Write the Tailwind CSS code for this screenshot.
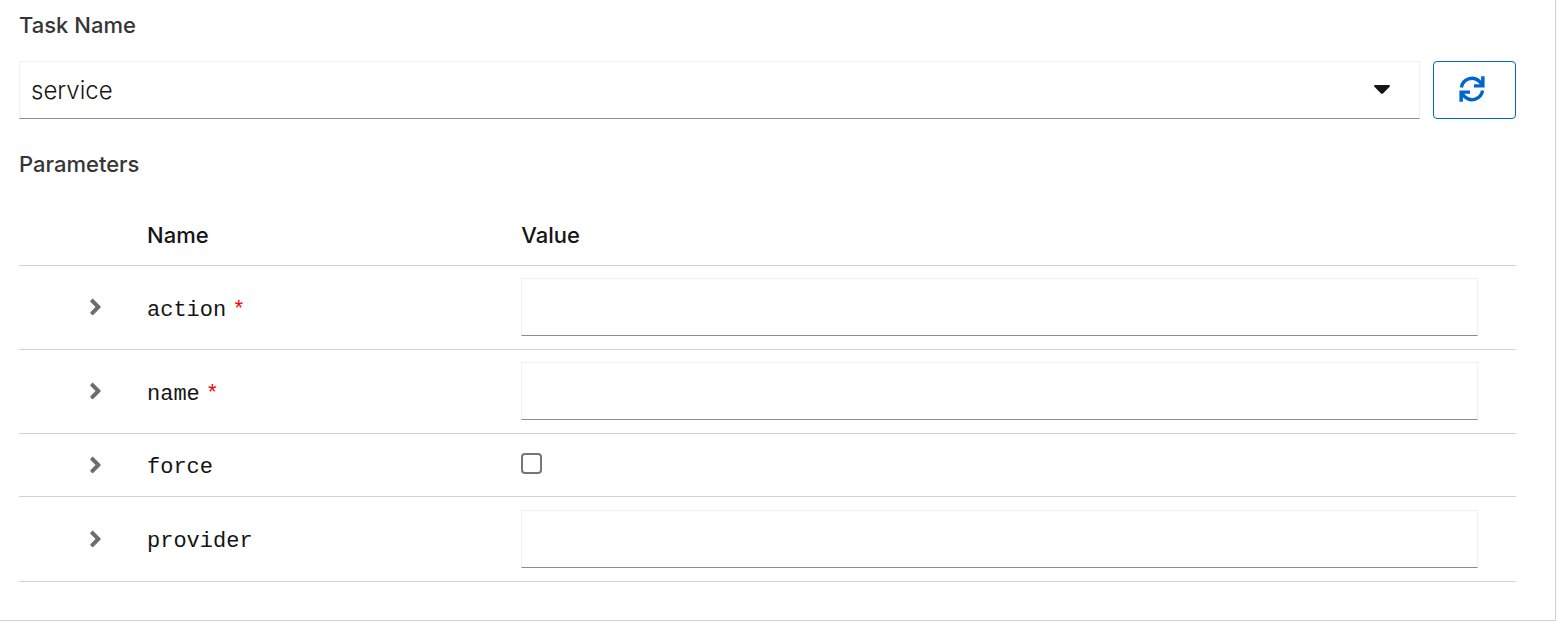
<!DOCTYPE html>
<html lang="en">

<head>
  <meta charset="UTF-8">
  <meta name="viewport" content="width=device-width, initial-scale=1.0">
  <title>Task Parameters</title>
  <script src="https://cdn.jsdelivr.net/npm/@tailwindcss/browser@4"></script>
</head>

<body class="bg-white font-['Inter',sans-serif] text-[#151515]">
  <!-- Shared icons -->
  <svg class="hidden" aria-hidden="true">
    <symbol id="chevron" viewBox="0 0 256 512">
      <path fill="currentColor" d="M224.3 273l-136 136c-9.4 9.4-24.6 9.4-33.9 0l-22.6-22.6c-9.4-9.4-9.4-24.6 0-33.9l96.4-96.4-96.4-96.4c-9.4-9.4-9.4-24.6 0-33.9L54.3 103c9.4-9.4 24.6-9.4 33.9 0l136 136c9.5 9.4 9.5 24.6.1 34z" />
    </symbol>
  </svg>

  <main class="mr-0.5 border-r border-b border-[#d2d2d2] pt-2 pr-[39px] pb-[38px] pl-[19px]">
    <form>
      <label for="taskName" class="block text-[22px] leading-[34px] font-medium text-[#363636]">Task Name</label>
      <div class="mt-[19px] flex gap-[13px]">
        <div class="relative grow">
          <select id="taskName"
            class="h-[58px] w-full appearance-none border border-[#f0f0f0] border-b-[#8a8d90] bg-white px-[11px] pt-0.5 text-2xl font-light">
            <option selected>service</option>
          </select>
          <svg class="pointer-events-none absolute top-[24px] right-[30px] h-[9px] w-4" viewBox="0 0 16 9">
            <path fill="#151515" d="M1.2 0h13.6c1 0 1.5 1 .8 1.7L9 8.4c-.6.6-1.4.6-2 0L.4 1.7C-.3 1 .2 0 1.2 0z" />
          </svg>
        </div>
        <button type="button" title="Refresh"
          class="flex h-[58px] w-[83px] items-center justify-center rounded-sm border border-[#0066cc] pr-[6px] pb-0.5 text-[#0066cc]">
          <svg class="size-[26px]" viewBox="0 0 26 26" fill="none" stroke="currentColor" stroke-width="3.4">
            <path d="M2.4 11.4A10.7 10.7 0 0 1 20.5 5.5L23 8.5" />
            <path d="M23.6 14.6A10.7 10.7 0 0 1 5.5 20.500L3 17.5" />
            <path fill="currentColor" stroke="none" d="M22.100 .3h3.500v11.200H15V8.200h7.100zM3.900 25.700H.4V14.500H11v3.300H3.900z" />
          </svg>
        </button>
      </div>

      <h2 class="mt-7 text-[22px] leading-[34px] font-medium text-[#363636]">Parameters</h2>
      <table class="mt-6 w-full table-fixed border-collapse text-left">
        <thead>
          <tr class="h-[60px] border-b border-[#d2d2d2] text-[22px]">
            <td class="w-32"></td>
            <th scope="col" class="w-1/4 pt-px font-medium">Name</th>
            <th scope="col" class="pt-px font-medium">Value</th>
          </tr>
        </thead>
        <tbody class="font-['Liberation_Mono',monospace] text-[22px]">
          <tr class="h-[84px] border-b border-[#d2d2d2]">
            <td class="pl-[70px]">
              <button type="button" aria-label="Details of action" class="block text-[#6a6e73]">
                <svg class="h-[26px] w-[13px]"><use href="#chevron" /></svg>
              </button>
            </td>
            <td class="pt-1.5"><label for="action">action<span class="ml-1.5 text-[#ff0000]">*</span></label></td>
            <td class="pr-[38px]"><input id="action" type="text" required
                class="block h-[58px] w-full border border-[#f0f0f0] border-b-[#8a8d90] px-3"></td>
          </tr>
          <tr class="h-[84px] border-b border-[#d2d2d2]">
            <td class="pl-[70px]">
              <button type="button" aria-label="Details of name" class="block text-[#6a6e73]">
                <svg class="h-[26px] w-[13px]"><use href="#chevron" /></svg>
              </button>
            </td>
            <td class="pt-1.5"><label for="name">name<span class="ml-1.5 text-[#ff0000]">*</span></label></td>
            <td class="pr-[38px]"><input id="name" type="text" required
                class="block h-[58px] w-full border border-[#f0f0f0] border-b-[#8a8d90] px-3"></td>
          </tr>
          <tr class="h-[63px] border-b border-[#d2d2d2]">
            <td class="pl-[70px]">
              <button type="button" aria-label="Details of force" class="block text-[#6a6e73]">
                <svg class="h-[26px] w-[13px]"><use href="#chevron" /></svg>
              </button>
            </td>
            <td class="pt-1.5"><label for="force">force</label></td>
            <td class="pb-0.5"><input id="force" type="checkbox"
                class="block size-[21px] appearance-none rounded-sm border-2 border-[#767676] checked:bg-[#0066cc]"></td>
          </tr>
          <tr class="h-[85px] border-b border-[#d2d2d2]">
            <td class="pl-[70px]">
              <button type="button" aria-label="Details of provider" class="block text-[#6a6e73]">
                <svg class="h-[26px] w-[13px]"><use href="#chevron" /></svg>
              </button>
            </td>
            <td class="pt-1.5"><label for="provider">provider</label></td>
            <td class="pr-[38px]"><input id="provider" type="text"
                class="block h-[58px] w-full border border-[#f0f0f0] border-b-[#8a8d90] px-3"></td>
          </tr>
        </tbody>
      </table>
    </form>
  </main>
</body>

</html>
